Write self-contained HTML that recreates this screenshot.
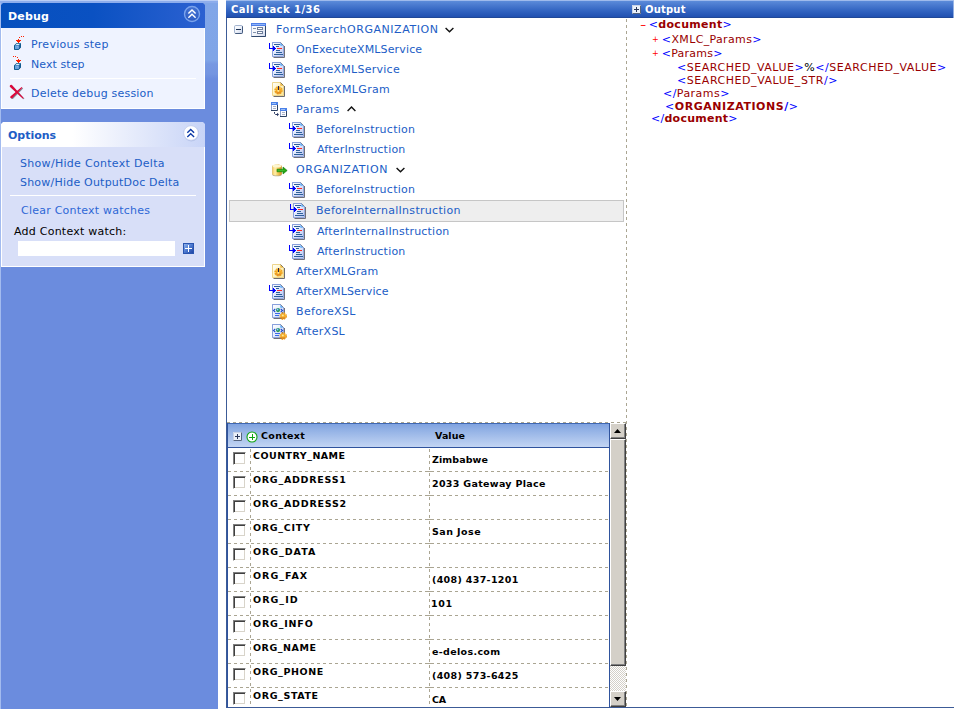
<!DOCTYPE html>
<html><head><meta charset="utf-8"><title>Debug</title>
<style>
html,body{margin:0;padding:0;}
body{width:954px;height:709px;position:relative;overflow:hidden;background:#fff;font-family:"DejaVu Sans","Liberation Sans",sans-serif;font-size:11px;color:#000;}
.abs{position:absolute;}
.ic{position:absolute;overflow:visible;}
#side{position:absolute;left:0;top:0;width:218px;height:709px;background:#6b8cde;}
#sidetop{position:absolute;left:0;top:0;width:218px;height:80px;background:linear-gradient(#81a6e8 0,#80a5e7 60px,#7798e2 64px,#7495e1 74px,#6b8cde 79px);}
.hdr{position:absolute;left:1px;width:204px;height:25px;font-weight:bold;font-size:11px;}
.hs{position:absolute;letter-spacing:0.15px;line-height:14px;white-space:pre;font-weight:bold;font-size:11px;}
.pbody{position:absolute;left:1px;width:202px;border:1px solid #fff;border-top:none;}
a.lk{position:absolute;color:#215dc6;text-decoration:none;white-space:pre;letter-spacing:0.3px;line-height:14px;}
.sep{position:absolute;height:1px;background:#fff;}
.t{position:absolute;color:#215dc6;white-space:pre;letter-spacing:0.35px;line-height:14px;}
.titlebar{position:absolute;top:0;height:18px;background:linear-gradient(#9ebaec 0,#9ebaec 1px,#5b8bd9 1px,#4a7acf 5px,#3163c0 11px,#2252b2 16.500px,#1d4698 17px,#234a97 18px);color:#fff;font-weight:bold;font-size:11px;}
.tb{position:absolute;letter-spacing:0;line-height:14px;white-space:pre;color:#fff;font-weight:bold;font-size:10px;}
.b{font-weight:bold;font-size:9.5px;position:absolute;white-space:pre;line-height:12px;letter-spacing:0.25px;}
.x{position:absolute;white-space:pre;line-height:14px;letter-spacing:0.45px;color:#990000;}
.x i{font-style:normal;color:#0000ff;}
.x b{color:#990000;}
.x u{text-decoration:none;color:#000;}
.x s{text-decoration:none;color:#ff0000;font-weight:bold;display:inline-block;width:5px;letter-spacing:0;}
.x s.p{font-weight:normal;font-size:8px;width:6px;position:relative;top:-1px;}
.x s.m{font-weight:normal;transform:scaleX(1.6);transform-origin:0 50%;}
.hd{position:absolute;height:1px;background:repeating-linear-gradient(90deg,#aaa592 0,#aaa592 3px,transparent 3px,transparent 6px);}
.vd{position:absolute;width:1px;background:repeating-linear-gradient(180deg,#aaa592 0,#aaa592 3px,transparent 3px,transparent 6px);}
.cb{position:absolute;width:11px;height:11px;background:#fff;border:1px solid;border-color:#808080 #fff #fff #808080;box-shadow:inset 1px 1px 0 #404040,inset -1px -1px 0 #d8d4ca;}
.sbtn{position:absolute;left:610px;width:14px;height:14px;background:#d4d0c8;border:1px solid;border-color:#fff #404040 #404040 #fff;box-shadow:inset -1px -1px 0 #808080;}
</style></head><body>

<div id="side"></div><div id="sidetop"></div>
<div class="abs" style="left:0;top:0;width:1px;height:709px;background:#a3bbef"></div>
<div class="abs" style="left:0;top:0;width:218px;height:1px;background:#b9cdf5"></div>
<div class="abs" style="left:0;top:1px;width:218px;height:2px;background:#8dadec"></div>
<div class="hdr" style="top:3px;background:linear-gradient(90deg,#0650be 0,#0a51c2 45%,#2c61d1 100%);color:#fff;clip-path:polygon(2px 0,202px 0,204px 2px,204px 25px,0 25px,0 2px)"></div>
<div id="t1" class="hs" style="left:8px;top:10px;color:#fff">Debug</div>
<div class="pbody" style="top:28px;height:80px;background:#eff3ff;"></div>
<div class="hdr" style="top:122px;background:linear-gradient(90deg,#fff 0,#fff 35%,#c8d4f7 100%);color:#215dc6;clip-path:polygon(2px 0,202px 0,204px 2px,204px 25px,0 25px,0 2px)"></div>
<div id="t2" class="hs" style="left:8px;top:129px;letter-spacing:-0.03px;color:#215dc6">Options</div>
<div class="pbody" style="top:147px;height:119px;background:#d8dff8;"></div>
<svg class="ic" style="left:183px;top:5px" width="18" height="18" viewBox="0 0 18 18" ><defs><radialGradient id="gcb" cx="0.5" cy="0.3" r="0.8"><stop offset="0" stop-color="#4a78d6"/><stop offset="1" stop-color="#2453bd"/></radialGradient></defs>
<circle cx="9" cy="9" r="7.500" fill="url(#gcb)" stroke="#7aa3ec" stroke-width="1.400"/>
<path d="M5.400 8.400l3.600-3.500l3.600 3.500M5.400 12.800l3.600-3.500l3.600 3.500" fill="none" stroke="#fff" stroke-width="1.400"/></svg>
<svg class="ic" style="left:182px;top:124px" width="18" height="18" viewBox="0 0 18 18" ><circle cx="9.300" cy="9.600" r="7.800" fill="#9fb0dd" opacity="0.550"/>
<circle cx="9" cy="9" r="7.300" fill="#fff" stroke="#c3cdee" stroke-width="0.800"/>
<path d="M5.300 8.700l3.400-3.200l3.400 3.200M5.300 13l3.400-3.200l3.400 3.200" fill="none" stroke="#0c39a6" stroke-width="1.400"/></svg>
<svg class="ic" style="left:13px;top:36px" width="13" height="15" viewBox="0 0 13 15" ><path d="M1.500 9.300l2-1.800h4v4l-1.800 2h-4.200z" fill="#2f78b4" stroke="#0d5a8c" stroke-width="1"/>
<path d="M2 9.500h3.700v3.600h-3.700z" fill="#6aa2dc"/><path d="M3.200 10.200l2.300-.5v2.500z" fill="#8fbdec" opacity="0.800"/>
<path d="M2.300 9l1.500-1.300h3.400l-1.500 1.300z" fill="#d9f3fb"/><path d="M6.200 9.300l1.200-1.300v3.400l-1.200 1.300z" fill="#1b5f9a"/><g shape-rendering="crispEdges" fill="#ff2200"><rect x="5" y="3" width="1" height="4"/><rect x="3" y="4" width="5" height="1"/><rect x="4" y="5" width="3" height="1"/></g><g fill="#ff2200" shape-rendering="crispEdges"><rect x="6" y="1" width="1" height="1"/><rect x="8" y="0" width="1" height="1"/><rect x="10" y="0" width="1" height="1"/></g></svg>
<svg class="ic" style="left:13px;top:56px" width="13" height="15" viewBox="0 0 13 15" ><path d="M1.500 9.300l2-1.800h4v4l-1.800 2h-4.200z" fill="#2f78b4" stroke="#0d5a8c" stroke-width="1"/>
<path d="M2 9.500h3.700v3.600h-3.700z" fill="#6aa2dc"/><path d="M3.200 10.200l2.300-.5v2.500z" fill="#8fbdec" opacity="0.800"/>
<path d="M2.300 9l1.500-1.300h3.400l-1.500 1.300z" fill="#d9f3fb"/><path d="M6.200 9.300l1.200-1.300v3.400l-1.200 1.300z" fill="#1b5f9a"/><g shape-rendering="crispEdges" fill="#ff2200"><rect x="5" y="3" width="1" height="4"/><rect x="3" y="4" width="5" height="1"/><rect x="4" y="5" width="3" height="1"/></g><g fill="#ff2200" shape-rendering="crispEdges"><rect x="0" y="0" width="1" height="1"/><rect x="2" y="0" width="1" height="1"/><rect x="4" y="1" width="1" height="1"/></g></svg>
<svg class="ic" style="left:9px;top:84px" width="16" height="16" viewBox="0 0 16 16" ><g transform="translate(0.800,0.700)" fill="#3c4454" opacity="0.600"><path d="M2.520 0.680L14.650 13.950L13.950 14.650L0.680 2.520Q0.500 0.500 2.520 0.680Z"/><path d="M3.080 14.350L1.320 12.450L12.660 3.030L13.340 3.770ZM1.320 12.450Q0.700 14.500 3.080 14.350Z"/></g>
<g fill="#de063a"><path d="M2.520 0.680L14.650 13.950L13.950 14.650L0.680 2.520Q0.500 0.500 2.520 0.680Z"/><path d="M3.080 14.350L1.320 12.450L12.660 3.030L13.340 3.770ZM1.320 12.450Q0.700 14.500 3.080 14.350Z"/></g></svg>
<a id="t3" class="lk" style="left:31px;top:38px;">Previous step</a>
<a id="t4" class="lk" style="left:31px;top:58px;letter-spacing:0.07px;">Next step</a>
<div class="sep" style="left:10px;top:78px;width:186px"></div>
<a id="t5" class="lk" style="left:31px;top:87px;letter-spacing:0.21px;">Delete debug session</a>
<a id="t6" class="lk" style="left:20px;top:157px;">Show/Hide Context Delta</a>
<a id="t7" class="lk" style="left:20px;top:176px;letter-spacing:0.21px;">Show/Hide OutputDoc Delta</a>
<div class="sep" style="left:10px;top:195px;width:186px"></div>
<a id="t8" class="lk" style="left:21px;top:204px;letter-spacing:0.23px;color:#2e67d6">Clear Context watches</a>
<div id="t9" class="t" style="left:14px;top:225px;letter-spacing:0.24px;color:#000">Add Context watch:</div>
<div class="abs" style="left:18px;top:241px;width:157px;height:15px;background:#fff"></div>
<svg class="ic" style="left:183px;top:243px" width="11" height="11" viewBox="0 0 11 11" ><defs><linearGradient id="gab" x1="0" y1="0" x2="1" y2="1"><stop offset="0" stop-color="#a3c2f4"/><stop offset="0.5" stop-color="#4a78d0"/><stop offset="1" stop-color="#17389a"/></linearGradient></defs>
<rect x="0" y="0" width="11" height="11" fill="url(#gab)"/><rect x="0.500" y="0.500" width="10" height="10" fill="none" stroke="#2a55b0"/>
<g shape-rendering="crispEdges" fill="#fff"><rect x="2" y="5" width="7" height="1"/><rect x="5" y="2" width="1" height="7"/></g></svg>
<div class="titlebar" style="left:226px;width:728px;"></div>
<div id="t10" class="tb" style="left:231px;top:3px;letter-spacing:0.46px;">Call stack 1/36</div>
<div id="t11" class="tb" style="left:645px;top:3px;letter-spacing:0.20px;">Output</div>
<div class="abs" style="left:953px;top:0;width:1px;height:18px;background:#a9c0ea;opacity:0.8"></div>
<svg class="ic" style="left:632px;top:5px" width="9" height="9" viewBox="0 0 9 9" ><rect x="0" y="0" width="9" height="9" fill="#eaf0fa"/>
<path d="M0.500 8.500v-8h8" fill="none" stroke="#c9d3e6"/><path d="M0.500 8.500h8v-8" fill="none" stroke="#56657f"/>
<g shape-rendering="crispEdges" fill="#27365a"><rect x="2" y="4" width="5" height="1"/><rect x="4" y="2" width="1" height="5"/></g></svg>
<div class="abs" style="left:226px;top:18px;width:1px;height:690px;background:#3c5b97"></div>
<div class="abs" style="left:226px;top:707px;width:728px;height:1px;background:#3c5b97"></div>
<div class="vd" style="left:626px;top:19px;height:688px"></div>
<div class="abs" style="left:229px;top:200px;width:393px;height:20px;background:#eeeeee;border:1px solid #c6c6c6"></div>
<div id="t12" class="t" style="left:276px;top:23px;letter-spacing:0.55px;">FormSearchORGANIZATION</div>
<div id="t13" class="t" style="left:296px;top:43px;letter-spacing:0.15px;">OnExecuteXMLService</div>
<div id="t14" class="t" style="left:296px;top:63px;letter-spacing:0.26px;">BeforeXMLService</div>
<div id="t15" class="t" style="left:296px;top:83px;">BeforeXMLGram</div>
<div id="t16" class="t" style="left:296px;top:103px;letter-spacing:0.55px;">Params</div>
<div id="t17" class="t" style="left:316px;top:123px;letter-spacing:0.26px;">BeforeInstruction</div>
<div id="t18" class="t" style="left:317px;top:143px;letter-spacing:0.20px;">AfterInstruction</div>
<div id="t19" class="t" style="left:296px;top:163px;letter-spacing:0.59px;">ORGANIZATION</div>
<div id="t20" class="t" style="left:316px;top:183px;letter-spacing:0.26px;">BeforeInstruction</div>
<div id="t21" class="t" style="left:316px;top:204px;letter-spacing:0.30px;">BeforeInternalInstruction</div>
<div id="t22" class="t" style="left:317px;top:225px;letter-spacing:0.20px;">AfterInternalInstruction</div>
<div id="t23" class="t" style="left:317px;top:245px;letter-spacing:0.20px;">AfterInstruction</div>
<div id="t24" class="t" style="left:296px;top:265px;letter-spacing:0.20px;">AfterXMLGram</div>
<div id="t25" class="t" style="left:296px;top:285px;letter-spacing:0.17px;">AfterXMLService</div>
<div id="t26" class="t" style="left:296px;top:305px;">BeforeXSL</div>
<div id="t27" class="t" style="left:296px;top:325px;letter-spacing:0.24px;">AfterXSL</div>
<svg class="ic" style="left:234px;top:25px" width="9" height="9" viewBox="0 0 9 9" ><defs><linearGradient id="gm" x1="0" y1="0" x2="1" y2="1"><stop offset="0" stop-color="#fff"/><stop offset="0.5" stop-color="#eef2fa"/><stop offset="1" stop-color="#c6d2ea"/></linearGradient></defs>
<rect x="0.500" y="0.500" width="8" height="8" rx="1.300" fill="url(#gm)" stroke="#a3b4cf"/>
<path d="M1.300 8.500h6.200q1 0 1-1v-6.200" fill="none" stroke="#43597c"/>
<rect x="2" y="4" width="5" height="1" fill="#1b3052" shape-rendering="crispEdges"/></svg>
<svg class="ic" style="left:251px;top:23px" width="15" height="14" viewBox="0 0 15 14" ><defs><linearGradient id="gf" x1="0" y1="0" x2="1" y2="1"><stop offset="0" stop-color="#fff"/><stop offset="0.5" stop-color="#f4f6fb"/><stop offset="1" stop-color="#cfd8ec"/></linearGradient></defs>
<rect x="0.500" y="0.500" width="14" height="13" fill="url(#gf)" stroke="#a6b7d8"/>
<rect x="0" y="0" width="15" height="3" fill="#4f7fe8"/><rect x="1" y="1" width="13" height="1" fill="#8fb3f7"/>
<path d="M0.500 13.500h14v-10.500" fill="none" stroke="#31486c"/>
<g shape-rendering="crispEdges"><rect x="2" y="5" width="3" height="1" fill="#8292ad"/><rect x="2" y="9" width="3" height="1" fill="#8292ad"/></g>
<rect x="6.500" y="4.500" width="5" height="2" fill="#fff" stroke="#6f7f9c"/><rect x="6.500" y="8.500" width="5" height="2" fill="#fff" stroke="#6f7f9c"/></svg>
<svg class="ic" style="left:269px;top:42px" width="17" height="17" viewBox="0 0 17 17" ><defs><linearGradient id="gda" x1="0" y1="0" x2="1" y2="1"><stop offset="0" stop-color="#ffffff"/><stop offset="0.45" stop-color="#e3eafc"/><stop offset="1" stop-color="#b4c3ee"/></linearGradient></defs>
<path d="M4.500 15.500h11v-11.500" fill="none" stroke="#6f6f78"/>
<path d="M3.500 0.500h8l3 3v11h-11z" fill="url(#gda)" stroke="#93a7dc"/>
<path d="M3.500 14.500v-14h8" fill="none" stroke="#88a0dc"/>
<path d="M11.300 0.800v2.900h2.900z" fill="#58a8f6"/>
<path d="M11.500 0.500l3 3" stroke="#7a7f93" stroke-width="0.900"/>
<g shape-rendering="crispEdges"><rect x="5" y="2" width="6" height="1" fill="#2d5f9b"/><rect x="7" y="4" width="3" height="1" fill="#2d5f9b"/>
<rect x="8" y="6" width="5" height="1" fill="#ff2626"/><rect x="7" y="8" width="4" height="1" fill="#2d5f9b"/><rect x="7" y="10" width="6" height="1" fill="#2d5f9b"/><rect x="5" y="12" width="9" height="1" fill="#2d5f9b"/>
<rect x="0" y="1" width="1" height="6" fill="#0000ff"/><rect x="0" y="6" width="5" height="1" fill="#0000ff"/>
<rect x="4" y="4" width="1" height="5" fill="#0000ff"/><rect x="5" y="5" width="1" height="3" fill="#0000ff"/><rect x="6" y="6" width="1" height="1" fill="#0000ff"/></g></svg>
<svg class="ic" style="left:269px;top:62px" width="17" height="17" viewBox="0 0 17 17" ><defs><linearGradient id="gda" x1="0" y1="0" x2="1" y2="1"><stop offset="0" stop-color="#ffffff"/><stop offset="0.45" stop-color="#e3eafc"/><stop offset="1" stop-color="#b4c3ee"/></linearGradient></defs>
<path d="M4.500 15.500h11v-11.500" fill="none" stroke="#6f6f78"/>
<path d="M3.500 0.500h8l3 3v11h-11z" fill="url(#gda)" stroke="#93a7dc"/>
<path d="M3.500 14.500v-14h8" fill="none" stroke="#88a0dc"/>
<path d="M11.300 0.800v2.900h2.900z" fill="#58a8f6"/>
<path d="M11.500 0.500l3 3" stroke="#7a7f93" stroke-width="0.900"/>
<g shape-rendering="crispEdges"><rect x="5" y="2" width="6" height="1" fill="#2d5f9b"/><rect x="7" y="4" width="3" height="1" fill="#2d5f9b"/>
<rect x="8" y="6" width="5" height="1" fill="#ff2626"/><rect x="7" y="8" width="4" height="1" fill="#2d5f9b"/><rect x="7" y="10" width="6" height="1" fill="#2d5f9b"/><rect x="5" y="12" width="9" height="1" fill="#2d5f9b"/>
<rect x="0" y="1" width="1" height="6" fill="#0000ff"/><rect x="0" y="6" width="5" height="1" fill="#0000ff"/>
<rect x="4" y="4" width="1" height="5" fill="#0000ff"/><rect x="5" y="5" width="1" height="3" fill="#0000ff"/><rect x="6" y="6" width="1" height="1" fill="#0000ff"/></g></svg>
<svg class="ic" style="left:272px;top:82px" width="14" height="16" viewBox="0 0 14 16" ><defs><linearGradient id="gg" x1="0" y1="0" x2="1" y2="1"><stop offset="0" stop-color="#ffffff"/><stop offset="0.4" stop-color="#fef7cf"/><stop offset="1" stop-color="#f9e59a"/></linearGradient></defs>
<path d="M1.500 14.500h11v-10.500" fill="none" stroke="#6c6c70"/>
<path d="M0.500 0.500h8l3 3v10h-11z" fill="url(#gg)" stroke="#edd58c"/>
<path d="M8.300 0.800v2.900h2.900z" fill="#f2b63a"/>
<path d="M8.500 0.500l3 3" stroke="#77705c" stroke-width="0.900"/>
<path d="M2.500 8.500a4 4 0 0 0 8 0l-1.200-3.500h-5.600z" fill="#f6b52a" opacity="0.550"/>
<circle cx="6.500" cy="8.300" r="2.600" fill="#f5ab22"/>
<circle cx="6.500" cy="8.300" r="3.400" fill="none" stroke="#f0a01a" stroke-width="1.500" stroke-dasharray="1.500 1.170"/>
<path d="M3.300 9.500a3.300 3.300 0 0 0 6.400 0z" fill="#d8791a" opacity="0.550"/>
<circle cx="6.300" cy="8.800" r="1.100" fill="#fde08a"/>
<rect x="6" y="4" width="1" height="4" fill="#26264e" shape-rendering="crispEdges"/></svg>
<svg class="ic" style="left:271px;top:102px" width="16" height="15" viewBox="0 0 16 15" ><g transform="translate(0,0)"><rect x="0" y="0" width="7" height="9" fill="#fbfcff"/><rect x="0" y="0" width="7" height="3" fill="#4a80e8"/><rect x="1" y="1" width="4" height="1" fill="#9cc0f8"/>
<path d="M0.500 3v5.500" stroke="#8fa3cb"/><path d="M0 8.500h6.500v-5.500" fill="none" stroke="#2b4163"/>
<rect x="2" y="4" width="3" height="1" fill="#aab2c8"/><rect x="2" y="6" width="3" height="1" fill="#aab2c8"/></g><g transform="translate(9,6)"><rect x="0" y="0" width="7" height="9" fill="#fbfcff"/><rect x="0" y="0" width="7" height="3" fill="#4a80e8"/><rect x="1" y="1" width="4" height="1" fill="#9cc0f8"/>
<path d="M0.500 3v5.500" stroke="#8fa3cb"/><path d="M0 8.500h6.500v-5.500" fill="none" stroke="#2b4163"/>
<rect x="2" y="4" width="3" height="1" fill="#aab2c8"/><rect x="2" y="6" width="3" height="1" fill="#aab2c8"/></g><path d="M3.500 10v1.500l1 1h2.500" fill="none" stroke="#2b3a62"/><path d="M6 10.800l2 1.700l-2 1.700z" fill="#2b3a62"/></svg>
<svg class="ic" style="left:289px;top:122px" width="17" height="17" viewBox="0 0 17 17" ><defs><linearGradient id="gda" x1="0" y1="0" x2="1" y2="1"><stop offset="0" stop-color="#ffffff"/><stop offset="0.45" stop-color="#e3eafc"/><stop offset="1" stop-color="#b4c3ee"/></linearGradient></defs>
<path d="M4.500 15.500h11v-11.500" fill="none" stroke="#6f6f78"/>
<path d="M3.500 0.500h8l3 3v11h-11z" fill="url(#gda)" stroke="#93a7dc"/>
<path d="M3.500 14.500v-14h8" fill="none" stroke="#88a0dc"/>
<path d="M11.300 0.800v2.900h2.900z" fill="#58a8f6"/>
<path d="M11.500 0.500l3 3" stroke="#7a7f93" stroke-width="0.900"/>
<g shape-rendering="crispEdges"><rect x="5" y="2" width="6" height="1" fill="#2d5f9b"/><rect x="7" y="4" width="3" height="1" fill="#2d5f9b"/>
<rect x="8" y="6" width="5" height="1" fill="#ff2626"/><rect x="7" y="8" width="4" height="1" fill="#2d5f9b"/><rect x="7" y="10" width="6" height="1" fill="#2d5f9b"/><rect x="5" y="12" width="9" height="1" fill="#2d5f9b"/>
<rect x="0" y="1" width="1" height="6" fill="#0000ff"/><rect x="0" y="6" width="5" height="1" fill="#0000ff"/>
<rect x="4" y="4" width="1" height="5" fill="#0000ff"/><rect x="5" y="5" width="1" height="3" fill="#0000ff"/><rect x="6" y="6" width="1" height="1" fill="#0000ff"/></g></svg>
<svg class="ic" style="left:289px;top:142px" width="17" height="17" viewBox="0 0 17 17" ><defs><linearGradient id="gda" x1="0" y1="0" x2="1" y2="1"><stop offset="0" stop-color="#ffffff"/><stop offset="0.45" stop-color="#e3eafc"/><stop offset="1" stop-color="#b4c3ee"/></linearGradient></defs>
<path d="M4.500 15.500h11v-11.500" fill="none" stroke="#6f6f78"/>
<path d="M3.500 0.500h8l3 3v11h-11z" fill="url(#gda)" stroke="#93a7dc"/>
<path d="M3.500 14.500v-14h8" fill="none" stroke="#88a0dc"/>
<path d="M11.300 0.800v2.900h2.900z" fill="#58a8f6"/>
<path d="M11.500 0.500l3 3" stroke="#7a7f93" stroke-width="0.900"/>
<g shape-rendering="crispEdges"><rect x="5" y="2" width="6" height="1" fill="#2d5f9b"/><rect x="7" y="4" width="3" height="1" fill="#2d5f9b"/>
<rect x="8" y="6" width="5" height="1" fill="#ff2626"/><rect x="7" y="8" width="4" height="1" fill="#2d5f9b"/><rect x="7" y="10" width="6" height="1" fill="#2d5f9b"/><rect x="5" y="12" width="9" height="1" fill="#2d5f9b"/>
<rect x="0" y="1" width="1" height="6" fill="#0000ff"/><rect x="0" y="6" width="5" height="1" fill="#0000ff"/>
<rect x="4" y="4" width="1" height="5" fill="#0000ff"/><rect x="5" y="5" width="1" height="3" fill="#0000ff"/><rect x="6" y="6" width="1" height="1" fill="#0000ff"/></g></svg>
<svg class="ic" style="left:272px;top:164px" width="16" height="13" viewBox="0 0 16 13" ><defs><linearGradient id="gd" x1="0" y1="0" x2="1" y2="0"><stop offset="0" stop-color="#f4c95a"/><stop offset="0.300" stop-color="#fdefae"/><stop offset="0.55" stop-color="#f6d066"/><stop offset="1" stop-color="#d98f1c"/></linearGradient></defs>
<path d="M0.300 2c0-2.200 9.400-2.200 9.400 0v8.300c0 2.100-9.400 2.100-9.400 0z" fill="#b3aa92" transform="translate(0,0.350)"/>
<path d="M0.300 2.100c0-2.200 9.400-2.200 9.400 0v8c0 2-9.400 2-9.400 0z" fill="url(#gd)"/>
<ellipse cx="5" cy="2.100" rx="4.400" ry="1.500" fill="#fdf6cf"/>
<path d="M5 5.200h6v-2.200l4.200 3.500l-4.200 3.500v-2.200h-6z" fill="#22a314" stroke="#138208" stroke-width="0.600"/>
<rect x="5.600" y="6" width="7" height="0.900" fill="#4cc633" opacity="0.800"/></svg>
<svg class="ic" style="left:289px;top:182px" width="17" height="17" viewBox="0 0 17 17" ><defs><linearGradient id="gda" x1="0" y1="0" x2="1" y2="1"><stop offset="0" stop-color="#ffffff"/><stop offset="0.45" stop-color="#e3eafc"/><stop offset="1" stop-color="#b4c3ee"/></linearGradient></defs>
<path d="M4.500 15.500h11v-11.500" fill="none" stroke="#6f6f78"/>
<path d="M3.500 0.500h8l3 3v11h-11z" fill="url(#gda)" stroke="#93a7dc"/>
<path d="M3.500 14.500v-14h8" fill="none" stroke="#88a0dc"/>
<path d="M11.300 0.800v2.900h2.900z" fill="#58a8f6"/>
<path d="M11.500 0.500l3 3" stroke="#7a7f93" stroke-width="0.900"/>
<g shape-rendering="crispEdges"><rect x="5" y="2" width="6" height="1" fill="#2d5f9b"/><rect x="7" y="4" width="3" height="1" fill="#2d5f9b"/>
<rect x="8" y="6" width="5" height="1" fill="#ff2626"/><rect x="7" y="8" width="4" height="1" fill="#2d5f9b"/><rect x="7" y="10" width="6" height="1" fill="#2d5f9b"/><rect x="5" y="12" width="9" height="1" fill="#2d5f9b"/>
<rect x="0" y="1" width="1" height="6" fill="#0000ff"/><rect x="0" y="6" width="5" height="1" fill="#0000ff"/>
<rect x="4" y="4" width="1" height="5" fill="#0000ff"/><rect x="5" y="5" width="1" height="3" fill="#0000ff"/><rect x="6" y="6" width="1" height="1" fill="#0000ff"/></g></svg>
<svg class="ic" style="left:290px;top:203px" width="17" height="17" viewBox="0 0 17 17" ><defs><linearGradient id="gda" x1="0" y1="0" x2="1" y2="1"><stop offset="0" stop-color="#ffffff"/><stop offset="0.45" stop-color="#e3eafc"/><stop offset="1" stop-color="#b4c3ee"/></linearGradient></defs>
<path d="M4.500 15.500h11v-11.500" fill="none" stroke="#6f6f78"/>
<path d="M3.500 0.500h8l3 3v11h-11z" fill="url(#gda)" stroke="#93a7dc"/>
<path d="M3.500 14.500v-14h8" fill="none" stroke="#88a0dc"/>
<path d="M11.300 0.800v2.900h2.900z" fill="#58a8f6"/>
<path d="M11.500 0.500l3 3" stroke="#7a7f93" stroke-width="0.900"/>
<g shape-rendering="crispEdges"><rect x="5" y="2" width="6" height="1" fill="#2d5f9b"/><rect x="7" y="4" width="3" height="1" fill="#2d5f9b"/>
<rect x="8" y="6" width="5" height="1" fill="#ff2626"/><rect x="7" y="8" width="4" height="1" fill="#2d5f9b"/><rect x="7" y="10" width="6" height="1" fill="#2d5f9b"/><rect x="5" y="12" width="9" height="1" fill="#2d5f9b"/>
<rect x="0" y="1" width="1" height="6" fill="#0000ff"/><rect x="0" y="6" width="5" height="1" fill="#0000ff"/>
<rect x="4" y="4" width="1" height="5" fill="#0000ff"/><rect x="5" y="5" width="1" height="3" fill="#0000ff"/><rect x="6" y="6" width="1" height="1" fill="#0000ff"/></g></svg>
<svg class="ic" style="left:289px;top:224px" width="17" height="17" viewBox="0 0 17 17" ><defs><linearGradient id="gda" x1="0" y1="0" x2="1" y2="1"><stop offset="0" stop-color="#ffffff"/><stop offset="0.45" stop-color="#e3eafc"/><stop offset="1" stop-color="#b4c3ee"/></linearGradient></defs>
<path d="M4.500 15.500h11v-11.500" fill="none" stroke="#6f6f78"/>
<path d="M3.500 0.500h8l3 3v11h-11z" fill="url(#gda)" stroke="#93a7dc"/>
<path d="M3.500 14.500v-14h8" fill="none" stroke="#88a0dc"/>
<path d="M11.300 0.800v2.900h2.900z" fill="#58a8f6"/>
<path d="M11.500 0.500l3 3" stroke="#7a7f93" stroke-width="0.900"/>
<g shape-rendering="crispEdges"><rect x="5" y="2" width="6" height="1" fill="#2d5f9b"/><rect x="7" y="4" width="3" height="1" fill="#2d5f9b"/>
<rect x="8" y="6" width="5" height="1" fill="#ff2626"/><rect x="7" y="8" width="4" height="1" fill="#2d5f9b"/><rect x="7" y="10" width="6" height="1" fill="#2d5f9b"/><rect x="5" y="12" width="9" height="1" fill="#2d5f9b"/>
<rect x="0" y="1" width="1" height="6" fill="#0000ff"/><rect x="0" y="6" width="5" height="1" fill="#0000ff"/>
<rect x="4" y="4" width="1" height="5" fill="#0000ff"/><rect x="5" y="5" width="1" height="3" fill="#0000ff"/><rect x="6" y="6" width="1" height="1" fill="#0000ff"/></g></svg>
<svg class="ic" style="left:289px;top:244px" width="17" height="17" viewBox="0 0 17 17" ><defs><linearGradient id="gda" x1="0" y1="0" x2="1" y2="1"><stop offset="0" stop-color="#ffffff"/><stop offset="0.45" stop-color="#e3eafc"/><stop offset="1" stop-color="#b4c3ee"/></linearGradient></defs>
<path d="M4.500 15.500h11v-11.500" fill="none" stroke="#6f6f78"/>
<path d="M3.500 0.500h8l3 3v11h-11z" fill="url(#gda)" stroke="#93a7dc"/>
<path d="M3.500 14.500v-14h8" fill="none" stroke="#88a0dc"/>
<path d="M11.300 0.800v2.900h2.900z" fill="#58a8f6"/>
<path d="M11.500 0.500l3 3" stroke="#7a7f93" stroke-width="0.900"/>
<g shape-rendering="crispEdges"><rect x="5" y="2" width="6" height="1" fill="#2d5f9b"/><rect x="7" y="4" width="3" height="1" fill="#2d5f9b"/>
<rect x="8" y="6" width="5" height="1" fill="#ff2626"/><rect x="7" y="8" width="4" height="1" fill="#2d5f9b"/><rect x="7" y="10" width="6" height="1" fill="#2d5f9b"/><rect x="5" y="12" width="9" height="1" fill="#2d5f9b"/>
<rect x="0" y="1" width="1" height="6" fill="#0000ff"/><rect x="0" y="6" width="5" height="1" fill="#0000ff"/>
<rect x="4" y="4" width="1" height="5" fill="#0000ff"/><rect x="5" y="5" width="1" height="3" fill="#0000ff"/><rect x="6" y="6" width="1" height="1" fill="#0000ff"/></g></svg>
<svg class="ic" style="left:272px;top:264px" width="14" height="16" viewBox="0 0 14 16" ><defs><linearGradient id="gg" x1="0" y1="0" x2="1" y2="1"><stop offset="0" stop-color="#ffffff"/><stop offset="0.4" stop-color="#fef7cf"/><stop offset="1" stop-color="#f9e59a"/></linearGradient></defs>
<path d="M1.500 14.500h11v-10.500" fill="none" stroke="#6c6c70"/>
<path d="M0.500 0.500h8l3 3v10h-11z" fill="url(#gg)" stroke="#edd58c"/>
<path d="M8.300 0.800v2.900h2.900z" fill="#f2b63a"/>
<path d="M8.500 0.500l3 3" stroke="#77705c" stroke-width="0.900"/>
<path d="M2.500 8.500a4 4 0 0 0 8 0l-1.200-3.500h-5.600z" fill="#f6b52a" opacity="0.550"/>
<circle cx="6.500" cy="8.300" r="2.600" fill="#f5ab22"/>
<circle cx="6.500" cy="8.300" r="3.400" fill="none" stroke="#f0a01a" stroke-width="1.500" stroke-dasharray="1.500 1.170"/>
<path d="M3.300 9.500a3.300 3.300 0 0 0 6.400 0z" fill="#d8791a" opacity="0.550"/>
<circle cx="6.300" cy="8.800" r="1.100" fill="#fde08a"/>
<rect x="6" y="4" width="1" height="4" fill="#26264e" shape-rendering="crispEdges"/></svg>
<svg class="ic" style="left:269px;top:284px" width="17" height="17" viewBox="0 0 17 17" ><defs><linearGradient id="gda" x1="0" y1="0" x2="1" y2="1"><stop offset="0" stop-color="#ffffff"/><stop offset="0.45" stop-color="#e3eafc"/><stop offset="1" stop-color="#b4c3ee"/></linearGradient></defs>
<path d="M4.500 15.500h11v-11.500" fill="none" stroke="#6f6f78"/>
<path d="M3.500 0.500h8l3 3v11h-11z" fill="url(#gda)" stroke="#93a7dc"/>
<path d="M3.500 14.500v-14h8" fill="none" stroke="#88a0dc"/>
<path d="M11.300 0.800v2.900h2.900z" fill="#58a8f6"/>
<path d="M11.500 0.500l3 3" stroke="#7a7f93" stroke-width="0.900"/>
<g shape-rendering="crispEdges"><rect x="5" y="2" width="6" height="1" fill="#2d5f9b"/><rect x="7" y="4" width="3" height="1" fill="#2d5f9b"/>
<rect x="8" y="6" width="5" height="1" fill="#ff2626"/><rect x="7" y="8" width="4" height="1" fill="#2d5f9b"/><rect x="7" y="10" width="6" height="1" fill="#2d5f9b"/><rect x="5" y="12" width="9" height="1" fill="#2d5f9b"/>
<rect x="0" y="1" width="1" height="6" fill="#0000ff"/><rect x="0" y="6" width="5" height="1" fill="#0000ff"/>
<rect x="4" y="4" width="1" height="5" fill="#0000ff"/><rect x="5" y="5" width="1" height="3" fill="#0000ff"/><rect x="6" y="6" width="1" height="1" fill="#0000ff"/></g></svg>
<svg class="ic" style="left:272px;top:304px" width="16" height="17" viewBox="0 0 16 17" ><defs><linearGradient id="gx" x1="0" y1="0" x2="1" y2="1"><stop offset="0" stop-color="#ffffff"/><stop offset="0.45" stop-color="#eaf0fd"/><stop offset="1" stop-color="#c3d0f3"/></linearGradient></defs>
<path d="M1.500 14.500h11v-10.500" fill="none" stroke="#6f6f78"/>
<path d="M0.500 0.500h8l3 3v10h-11z" fill="url(#gx)" stroke="#93a7dc"/>
<path d="M0.500 13.500v-13h8" fill="none" stroke="#88a0dc"/>
<path d="M8.300 0.800v2.900h2.900z" fill="#58a8f6"/>
<path d="M8.500 0.500l3 3" stroke="#7a7f93" stroke-width="0.900"/>
<path d="M3.300 4.800l-1.800 1.700l1.800 1.700M8.700 4.800l1.800 1.700l-1.800 1.700" fill="none" stroke="#1c47c8" stroke-width="1.100"/>
<circle cx="6" cy="6.100" r="2.100" fill="#2c9a50"/><circle cx="5.700" cy="5.600" r="1.100" fill="#4a9ae8"/><circle cx="5.400" cy="5.200" r="0.500" fill="#d8f0ff"/>
<rect x="3" y="9" width="5" height="1" fill="#3a6ae8"/><rect x="3" y="11" width="4" height="1" fill="#3a6ae8"/>
<rect x="10" y="8" width="1" height="4" fill="#4c5270"/>
<circle cx="11.200" cy="12.100" r="2.700" fill="#f5ae28"/>
<circle cx="11.200" cy="12.100" r="3.100" fill="none" stroke="#f0a01c" stroke-width="1.400" stroke-dasharray="1.600 0.850"/>
<path d="M8.300 13a3 3 0 0 0 5.800 0z" fill="#d8791a" opacity="0.500"/>
<circle cx="10.800" cy="11.600" r="1" fill="#fde69a"/></svg>
<svg class="ic" style="left:272px;top:324px" width="16" height="17" viewBox="0 0 16 17" ><defs><linearGradient id="gx" x1="0" y1="0" x2="1" y2="1"><stop offset="0" stop-color="#ffffff"/><stop offset="0.45" stop-color="#eaf0fd"/><stop offset="1" stop-color="#c3d0f3"/></linearGradient></defs>
<path d="M1.500 14.500h11v-10.500" fill="none" stroke="#6f6f78"/>
<path d="M0.500 0.500h8l3 3v10h-11z" fill="url(#gx)" stroke="#93a7dc"/>
<path d="M0.500 13.500v-13h8" fill="none" stroke="#88a0dc"/>
<path d="M8.300 0.800v2.900h2.900z" fill="#58a8f6"/>
<path d="M8.500 0.500l3 3" stroke="#7a7f93" stroke-width="0.900"/>
<path d="M3.300 4.800l-1.800 1.700l1.800 1.700M8.700 4.800l1.800 1.700l-1.800 1.700" fill="none" stroke="#1c47c8" stroke-width="1.100"/>
<circle cx="6" cy="6.100" r="2.100" fill="#2c9a50"/><circle cx="5.700" cy="5.600" r="1.100" fill="#4a9ae8"/><circle cx="5.400" cy="5.200" r="0.500" fill="#d8f0ff"/>
<rect x="3" y="9" width="5" height="1" fill="#3a6ae8"/><rect x="3" y="11" width="4" height="1" fill="#3a6ae8"/>
<rect x="10" y="8" width="1" height="4" fill="#4c5270"/>
<circle cx="11.200" cy="12.100" r="2.700" fill="#f5ae28"/>
<circle cx="11.200" cy="12.100" r="3.100" fill="none" stroke="#f0a01c" stroke-width="1.400" stroke-dasharray="1.600 0.850"/>
<path d="M8.300 13a3 3 0 0 0 5.800 0z" fill="#d8791a" opacity="0.500"/>
<circle cx="10.800" cy="11.600" r="1" fill="#fde69a"/></svg>
<svg class="ic" style="left:445px;top:27px" width="9" height="6" viewBox="0 0 9 6" ><path d="M0.600 0.900l3.900 3.900l3.900-3.900" fill="none" stroke="#111" stroke-width="1.400"/></svg>
<svg class="ic" style="left:347px;top:106px" width="9" height="6" viewBox="0 0 9 6" ><path d="M0.600 5l3.900-3.900l3.900 3.900" fill="none" stroke="#111" stroke-width="1.400"/></svg>
<svg class="ic" style="left:396px;top:167px" width="9" height="6" viewBox="0 0 9 6" ><path d="M0.600 0.900l3.900 3.900l3.900-3.900" fill="none" stroke="#111" stroke-width="1.400"/></svg>
<div class="hd" style="left:227px;top:422px;width:400px"></div>
<div class="abs" style="left:227px;top:423px;width:383px;height:25px;background:linear-gradient(#7fa2e0 0,#8eaee4 20%,#c3d5f3 100%);border-top:1px solid #3f68b4;border-bottom:1px solid #2f539d;box-sizing:border-box"></div>
<div class="abs" style="left:227px;top:423px;width:1px;height:285px;background:#2f539d"></div>
<div class="abs" style="left:609px;top:423px;width:1px;height:285px;background:#2f539d"></div>
<svg class="ic" style="left:233px;top:432px" width="9" height="9" viewBox="0 0 9 9" ><rect x="0" y="0" width="9" height="9" fill="#eaf0fa"/>
<path d="M0.500 8.500v-8h8" fill="none" stroke="#c9d3e6"/><path d="M0.500 8.500h8v-8" fill="none" stroke="#56657f"/>
<g shape-rendering="crispEdges" fill="#27365a"><rect x="2" y="4" width="5" height="1"/><rect x="4" y="2" width="1" height="5"/></g></svg>
<svg class="ic" style="left:245.5px;top:430.5px" width="12" height="12" viewBox="0 0 12 12" ><circle cx="6" cy="6" r="5" fill="#fff" stroke="#11a511" stroke-width="1.100"/>
<g shape-rendering="crispEdges" fill="#11a511"><rect x="3" y="5.500" width="6" height="1"/><rect x="5.500" y="3" width="1" height="6"/></g></svg>
<div id="t28" class="b" style="left:261px;top:430px;letter-spacing:0.32px;">Context</div>
<div id="t29" class="b" style="left:435px;top:430px;letter-spacing:0.05px;">Value</div>
<div class="cb" style="left:233px;top:452px"></div>
<div id="t30" class="b" style="left:253px;top:450px;letter-spacing:0.47px;">COUNTRY_NAME</div>
<div id="t31" class="b" style="left:432px;top:454px;letter-spacing:0.09px;">Zimbabwe</div>
<div class="hd" style="left:228px;top:471px;width:22px"></div><div class="hd" style="left:251px;top:471px;width:358px"></div><div class="abs" style="left:428px;top:471px;width:3px;height:1px;background:#aaa592"></div>
<div class="cb" style="left:233px;top:476px"></div>
<div id="t32" class="b" style="left:253px;top:474px;letter-spacing:0.74px;">ORG_ADDRESS1</div>
<div id="t33" class="b" style="left:432px;top:478px;letter-spacing:0.32px;">2033 Gateway Place</div>
<div class="hd" style="left:228px;top:495px;width:22px"></div><div class="hd" style="left:251px;top:495px;width:358px"></div><div class="abs" style="left:428px;top:495px;width:3px;height:1px;background:#aaa592"></div>
<div class="cb" style="left:233px;top:500px"></div>
<div id="t34" class="b" style="left:253px;top:498px;letter-spacing:0.76px;">ORG_ADDRESS2</div>
<div class="hd" style="left:228px;top:519px;width:22px"></div><div class="hd" style="left:251px;top:519px;width:358px"></div><div class="abs" style="left:428px;top:519px;width:3px;height:1px;background:#aaa592"></div>
<div class="cb" style="left:233px;top:524px"></div>
<div id="t35" class="b" style="left:253px;top:522px;letter-spacing:0.71px;">ORG_CITY</div>
<div id="t36" class="b" style="left:432px;top:526px;letter-spacing:0.45px;">San Jose</div>
<div class="hd" style="left:228px;top:543px;width:22px"></div><div class="hd" style="left:251px;top:543px;width:358px"></div><div class="abs" style="left:428px;top:543px;width:3px;height:1px;background:#aaa592"></div>
<div class="cb" style="left:233px;top:548px"></div>
<div id="t37" class="b" style="left:253px;top:546px;letter-spacing:0.96px;">ORG_DATA</div>
<div class="hd" style="left:228px;top:567px;width:22px"></div><div class="hd" style="left:251px;top:567px;width:358px"></div><div class="abs" style="left:428px;top:567px;width:3px;height:1px;background:#aaa592"></div>
<div class="cb" style="left:233px;top:572px"></div>
<div id="t38" class="b" style="left:253px;top:570px;letter-spacing:1.02px;">ORG_FAX</div>
<div id="t39" class="b" style="left:432px;top:574px;letter-spacing:0.33px;">(408) 437-1201</div>
<div class="hd" style="left:228px;top:591px;width:22px"></div><div class="hd" style="left:251px;top:591px;width:358px"></div><div class="abs" style="left:428px;top:591px;width:3px;height:1px;background:#aaa592"></div>
<div class="cb" style="left:233px;top:596px"></div>
<div id="t40" class="b" style="left:253px;top:594px;letter-spacing:1.05px;">ORG_ID</div>
<div id="t41" class="b" style="left:431px;top:598px;letter-spacing:0.70px;">101</div>
<div class="hd" style="left:228px;top:615px;width:22px"></div><div class="hd" style="left:251px;top:615px;width:358px"></div><div class="abs" style="left:428px;top:615px;width:3px;height:1px;background:#aaa592"></div>
<div class="cb" style="left:233px;top:620px"></div>
<div id="t42" class="b" style="left:253px;top:618px;letter-spacing:0.82px;">ORG_INFO</div>
<div class="hd" style="left:228px;top:639px;width:22px"></div><div class="hd" style="left:251px;top:639px;width:358px"></div><div class="abs" style="left:428px;top:639px;width:3px;height:1px;background:#aaa592"></div>
<div class="cb" style="left:233px;top:644px"></div>
<div id="t43" class="b" style="left:253px;top:642px;letter-spacing:0.54px;">ORG_NAME</div>
<div id="t44" class="b" style="left:432px;top:646px;letter-spacing:0.34px;">e-delos.com</div>
<div class="hd" style="left:228px;top:663px;width:22px"></div><div class="hd" style="left:251px;top:663px;width:358px"></div><div class="abs" style="left:428px;top:663px;width:3px;height:1px;background:#aaa592"></div>
<div class="cb" style="left:233px;top:668px"></div>
<div id="t45" class="b" style="left:253px;top:666px;letter-spacing:0.62px;">ORG_PHONE</div>
<div id="t46" class="b" style="left:432px;top:670px;letter-spacing:0.33px;">(408) 573-6425</div>
<div class="hd" style="left:228px;top:687px;width:22px"></div><div class="hd" style="left:251px;top:687px;width:358px"></div><div class="abs" style="left:428px;top:687px;width:3px;height:1px;background:#aaa592"></div>
<div class="cb" style="left:233px;top:692px"></div>
<div id="t47" class="b" style="left:253px;top:690px;letter-spacing:0.62px;">ORG_STATE</div>
<div id="t48" class="b" style="left:432px;top:694px;letter-spacing:-0.15px;">CA</div>
<div class="vd" style="left:250px;top:449px;height:258px"></div>
<div class="vd" style="left:429px;top:449px;height:258px"></div>
<div class="abs" style="left:610px;top:423px;width:16px;height:284px;background:#d4d0c8"></div>
<div class="abs" style="left:610px;top:666px;width:16px;height:25px;background:repeating-conic-gradient(#fff 0 25%,#d4d0c8 0 50%) 0 0/2px 2px"></div>
<div class="sbtn" style="top:423px"></div><div class="sbtn" style="top:691px"></div>
<div class="sbtn" style="top:439px;height:225px"></div>
<svg class="ic" style="left:614px;top:429px" width="7" height="4" viewBox="0 0 7 4" ><path d="M0 4h7l-3.500-4z" fill="#000"/></svg>
<svg class="ic" style="left:614px;top:697px" width="7" height="4" viewBox="0 0 7 4" ><path d="M0 0h7l-3.500 4z" fill="#000"/></svg>
<div id="t49" class="x" style="left:640px;top:18px;letter-spacing:0.29px;"><s class="m">-</s> <i>&lt;</i><b>document</b><i>&gt;</i></div>
<div id="t50" class="x" style="left:652px;top:33px;letter-spacing:0.35px;"><s class="p">+</s> <i>&lt;</i>XMLC_Params<i>&gt;</i></div>
<div id="t51" class="x" style="left:652px;top:47px;letter-spacing:0.23px;"><s class="p">+</s> <i>&lt;</i>Params<i>&gt;</i></div>
<div id="t52" class="x" style="left:677px;top:61px;letter-spacing:0.53px;"><i>&lt;</i>SEARCHED_VALUE<i>&gt;</i><u>%</u><i>&lt;/</i>SEARCHED_VALUE<i>&gt;</i></div>
<div id="t53" class="x" style="left:677px;top:74px;letter-spacing:0.55px;"><i>&lt;</i>SEARCHED_VALUE_STR<i>/&gt;</i></div>
<div id="t54" class="x" style="left:663px;top:87px;"><i>&lt;/</i>Params<i>&gt;</i></div>
<div id="t55" class="x" style="left:665px;top:100px;letter-spacing:0.54px;"><i>&lt;</i><b>ORGANIZATIONS</b><i><b style="color:#0000ff">/</b>&gt;</i></div>
<div id="t56" class="x" style="left:651px;top:112px;letter-spacing:0.26px;"><i>&lt;/</i><b>document</b><i>&gt;</i></div>
</body></html>
